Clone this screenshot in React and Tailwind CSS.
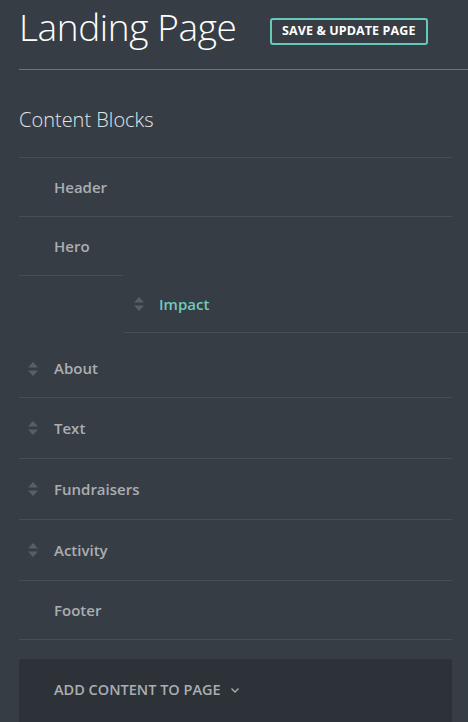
import React from 'react';

function Handle() {
  return (
    <svg width="12" height="16" viewBox="0 0 12 16" className="shrink-0">
      <path d="M6 1 L11 6.5 L1 6.5 Z" fill="#575e66" />
      <path d="M6 15 L11 9.5 L1 9.5 Z" fill="#575e66" />
    </svg>
  );
}

function Row({ label, handle, className = '' }) {
  return (
    <div className={`flex items-center border-b border-[#484e56] ${className}`}>
      <div className="w-[35px] flex justify-start pl-[8px]">{handle && <Handle />}</div>
      <span className="text-[15px] font-semibold text-[#aaaeb2]">{label}</span>
    </div>
  );
}

export default function App() {
  return (
    <div className="w-[468px] h-[722px] overflow-hidden bg-[#373d45] font-['Open_Sans',sans-serif]">
      <div className="flex items-start pl-[19px] h-[69px]">
        <h1 className="w-[251px] mt-[8px] text-[37px] font-light text-white leading-none tracking-[-0.4px]">Landing Page</h1>
        <button className="mt-[18px] h-[27px] px-[10px] border-2 border-[#68c8ba] rounded-[3px] text-[12.5px] font-bold text-white tracking-[0.1px]">
          SAVE &amp; UPDATE PAGE
        </button>
      </div>
      <div className="ml-[19px] border-t border-[#6c727a]"></div>

      <h2 className="pl-[19px] pt-[40px] text-[20px] font-light text-[#e2e5e8] leading-none h-[87px]">Content Blocks</h2>

      <div className="ml-[19px] mr-[16px] border-t border-[#484e56]">
        <Row label="Header" className="h-[59px]" />
        <div className="flex items-center h-[59px] w-[104px] border-b border-[#484e56]">
          <div className="w-[35px]"></div>
          <span className="text-[15px] font-semibold text-[#aaaeb2]">Hero</span>
        </div>
      </div>

      <div className="ml-[124px] flex items-center h-[57px] border-b border-[#484e56]">
        <div className="w-[35px] flex justify-start pl-[9px]"><Handle /></div>
        <span className="text-[15px] font-semibold text-[#6ecbbd]">Impact</span>
      </div>

      <div className="ml-[19px] mr-[16px]">
        <Row label="About" handle className="h-[65px] pt-[7px]" />
        <Row label="Text" handle className="h-[61px]" />
        <Row label="Fundraisers" handle className="h-[61px]" />
        <Row label="Activity" handle className="h-[61px]" />
        <Row label="Footer" className="h-[59px]" />
      </div>

      <div className="ml-[19px] mr-[16px] mt-[19px] h-[70px] bg-[#2d3238] rounded-t-[3px] flex items-center pl-[35px] pb-[9px]">
        <span className="text-[14.5px] font-semibold text-[#aaaeb2]">ADD CONTENT TO PAGE</span>
        <svg width="10" height="7" viewBox="0 0 10 7" className="ml-[9px] mt-[1px]">
          <path d="M1.5 1.5 L5 5 L8.5 1.5" fill="none" stroke="#aaaeb2" strokeWidth="1.3" />
        </svg>
      </div>
    </div>
  );
}
